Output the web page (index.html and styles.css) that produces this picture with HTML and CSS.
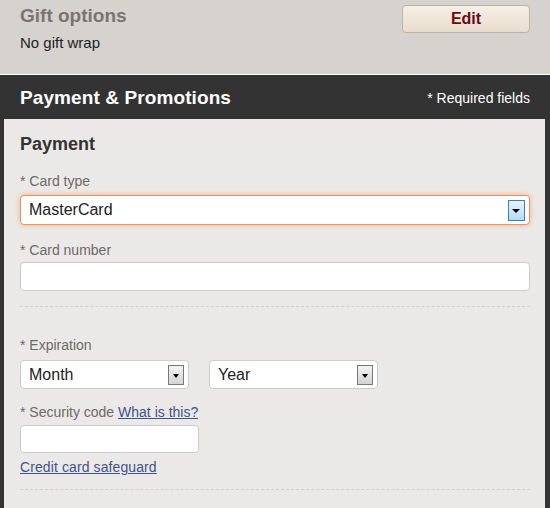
FILE: index.html
```html
<!DOCTYPE html>
<html lang="en">
<head>
    <meta charset="UTF-8">
    <title>Checkout</title>
    <link rel="stylesheet" href="styles.css">
</head>
<body>
    <div class="gift">
        <div class="gift-info">
            <h2>Gift options</h2>
            <p>No gift wrap</p>
        </div>
        <button class="edit-btn">Edit</button>
    </div>

    <div class="section">
        <div class="section-head">
            <h1>Payment &amp; Promotions</h1>
            <span class="required">* Required fields</span>
        </div>

        <div class="panel">
            <h3>Payment</h3>

            <label>* Card type</label>
            <div class="select focus">
                <span>MasterCard</span>
                <span class="arrow blue"></span>
            </div>

            <label class="tight">* Card number</label>
            <div class="field"></div>

            <hr class="dash">

            <label class="exp-label">* Expiration</label>
            <div class="row">
                <div class="select small">
                    <span>Month</span>
                    <span class="arrow"></span>
                </div>
                <div class="select small">
                    <span>Year</span>
                    <span class="arrow"></span>
                </div>
            </div>

            <label class="sec-label">* Security code <a href="#">What is this?</a></label>
            <div class="field short"></div>

            <a class="safeguard" href="#">Credit card safeguard</a>

            <hr class="dash">
        </div>
    </div>
</body>
</html>
```

FILE: styles.css
```css
body {
    margin: 0;
    font-family: 'Liberation Sans', Arial, sans-serif;
    background-color: #333;
    height: 508px;
    overflow: hidden;
}

.gift {
    background-color: #d6d3cf;
    height: 75px;
    border-bottom: 1px solid #fff;
    display: flex;
    justify-content: space-between;
    align-items: flex-start;
    padding: 0 20px;
    box-sizing: border-box;
}

.gift h2 {
    margin: 5px 0 0;
    font-size: 19px;
    line-height: 22px;
    color: #7a7470;
}

.gift p {
    margin: 7px 0 0;
    font-size: 15px;
    line-height: 17px;
    color: #222;
}

.edit-btn {
    margin-top: 5px;
    width: 128px;
    height: 28px;
    border: 1px solid #bdb3a8;
    border-radius: 4px;
    background: linear-gradient(#f6efe6, #e8dccd);
    color: #6a0b16;
    font-family: 'Liberation Sans', Arial, sans-serif;
    font-size: 16px;
    font-weight: bold;
    padding: 0;
}

.section-head {
    height: 44px;
    display: flex;
    justify-content: space-between;
    align-items: center;
    padding: 0 20px;
    color: #fff;
}

.section-head h1 {
    margin: 2px 0 0;
    font-size: 19px;
    letter-spacing: 0.1px;
}

.required {
    font-size: 14px;
    margin-top: 2px;
}

.panel {
    background-color: #ebe9e7;
    margin: 0 5px 0 4px;
    padding: 15px 15px 20px 16px;
    height: 354px;
}

.panel h3 {
    margin: 0 0 18px;
    font-size: 18px;
    line-height: 21px;
    color: #333;
}

label {
    display: block;
    font-size: 14px;
    line-height: 16px;
    color: #6e6a66;
    margin-bottom: 6px;
}

label.tight {
    margin-bottom: 4px;
}

label a, .safeguard {
    color: #43528b;
    text-decoration: underline;
}

.select {
    height: 30px;
    box-sizing: border-box;
    background: #fff;
    border: 1px solid #ccc;
    border-radius: 4px;
    display: flex;
    align-items: center;
    justify-content: space-between;
    padding: 0 4px 0 8px;
    font-size: 16px;
    color: #222;
    margin-bottom: 17px;
}

.select.focus {
    border-color: #f0915a;
    box-shadow: 0 0 5px rgba(240, 140, 80, 0.6);
}

.arrow {
    width: 16px;
    height: 20px;
    box-sizing: border-box;
    border: 1px solid #777;
    background: linear-gradient(#f4f4f4, #d4d4d4);
    position: relative;
}

.arrow::after {
    content: '';
    position: absolute;
    left: 4px;
    top: 8px;
    border-left: 3px solid transparent;
    border-right: 3px solid transparent;
    border-top: 4px solid #000;
}

.arrow.blue {
    width: 17px;
    height: 21px;
    border-color: #3c7fb1;
    background: linear-gradient(#e6f3fc, #b4dcf6);
}

.arrow.blue::after {
    left: 3px;
    border-left-width: 4px;
    border-right-width: 4px;
}

.field {
    height: 29px;
    box-sizing: border-box;
    background: #fff;
    border: 1px solid #ccc;
    border-radius: 4px;
    margin-bottom: 15px;
}

.field.short {
    width: 179px;
    height: 28px;
    margin-bottom: 6px;
}

.dash {
    border: none;
    border-top: 1px dashed #d2d0ce;
    margin: 0;
}

.exp-label {
    margin-top: 30px;
    margin-bottom: 7px;
}

.sec-label {
    margin-bottom: 5px;
}

.row {
    display: flex;
    gap: 20px;
}

.select.small {
    width: 169px;
    height: 29px;
    margin-bottom: 15px;
}

.safeguard {
    display: block;
    font-size: 14px;
    line-height: 16px;
    letter-spacing: 0.1px;
    margin-bottom: 14px;
}
```
